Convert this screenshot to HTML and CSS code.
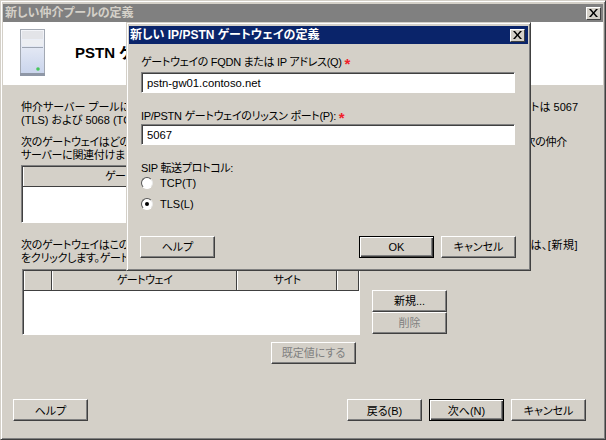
FILE: index.html
```html
<!DOCTYPE html>
<html lang="ja">
<head>
  <title>新しい仲介プールの定義</title>
  <link rel="stylesheet" href="styles.css">
</head>
<body>
  <div class="wizard">
    <div class="titlebar inactive">
      <span class="title-text">新しい仲介プールの定義</span>
      <span class="close-btn"><svg width="9" height="8" viewBox="0 0 9 8"><path d="M0 0h2l2.5 3L7 0h2L5.500 4 9 8H7L4.500 5 2 8H0l3.500-4z" fill="#000"/></svg></span>
    </div>
    <div class="wizard-head">
      <svg class="server-icon" width="25" height="47" viewBox="0 0 25 47">
        <defs>
          <linearGradient id="bodyFill" x1="0" y1="0" x2="0" y2="1">
            <stop offset="0" stop-color="#f4f5f9"/>
            <stop offset="1" stop-color="#c9d4ec"/>
          </linearGradient>
        </defs>
        <rect x="0.500" y="0.500" width="24" height="45" fill="url(#bodyFill)" stroke="#a3a9b3"/>
        <rect x="2" y="2" width="21" height="8" fill="#e3e4e8"/>
        <rect x="2" y="11" width="21" height="6" fill="#eceef2"/>
        <rect x="2" y="18" width="21" height="1" fill="#9ea5b2"/>
        <rect x="0" y="44" width="25" height="3" fill="#8f97a6"/>
        <circle cx="18" cy="40" r="1.800" fill="#45c65a"/>
      </svg>
      <h1 class="wizard-heading">PSTN ゲ</h1>
    </div>
    <div class="wizard-body">
      <div class="para">
        <div class="line"><span>仲介サーバー プールに</span><span class="line-end">トは 5067</span></div>
        <div class="line"><span>(TLS) および 5068 (TC</span></div>
      </div>
      <div class="para note">
        <div class="line"><span>次のゲートウェイはどの</span><span class="line-end short">次の仲介</span></div>
        <div class="line"><span>サーバーに関連付けま</span></div>
      </div>
      <div class="grid-box first-grid">
        <div class="grid-head"><span>ゲー</span></div>
        <div class="grid-rows"></div>
      </div>
      <div class="para note lower">
        <div class="line"><span>次のゲートウェイはこの</span><span class="line-end loose">は、[新規]</span></div>
        <div class="line"><span>をクリックします。ゲート</span></div>
      </div>
      <div class="gateway-row">
        <div class="grid-box second-grid">
          <div class="grid-head"><span></span><span>ゲートウェイ</span><span>サイト</span><span></span></div>
          <div class="grid-rows"></div>
        </div>
        <div class="side-btns">
          <button class="btn">新規...</button>
          <button class="btn" disabled>削除</button>
        </div>
      </div>
      <div class="default-row"><button class="btn wide" disabled>既定値にする</button></div>
    </div>
    <div class="wizard-foot">
      <button class="btn">ヘルプ</button>
      <div class="foot-right">
        <button class="btn">戻る(B)</button>
        <button class="btn primary">次へ(N)</button>
        <button class="btn">キャンセル</button>
      </div>
    </div>
  </div>

  <div class="dialog">
    <div class="titlebar active">
      <span class="title-text">新しい IP/PSTN ゲートウェイの定義</span>
      <span class="close-btn"><svg width="9" height="8" viewBox="0 0 9 8"><path d="M0 0h2l2.5 3L7 0h2L5.500 4 9 8H7L4.500 5 2 8H0l3.500-4z" fill="#000"/></svg></span>
    </div>
    <div class="dialog-body">
      <label class="field-label">ゲートウェイの FQDN または IP アドレス(Q) <span class="req">*</span></label>
      <input class="field" type="text" value="pstn-gw01.contoso.net">
      <label class="field-label second">IP/PSTN ゲートウェイのリッスン ポート(P): <span class="req">*</span></label>
      <input class="field" type="text" value="5067">
      <div class="field-label third">SIP 転送プロトコル:</div>
      <div class="radio-row"><span class="radio"></span>TCP(T)</div>
      <div class="radio-row"><span class="radio checked"></span>TLS(L)</div>
      <div class="dialog-foot">
        <button class="btn">ヘルプ</button>
        <div class="foot-right">
          <button class="btn primary">OK</button>
          <button class="btn">キャンセル</button>
        </div>
      </div>
    </div>
  </div>
</body>
</html>
```

FILE: styles.css
```css
html, body {
  margin: 0;
  padding: 0;
}
body {
  width: 606px;
  height: 440px;
  overflow: hidden;
  position: relative;
  background: #d4d0c8;
  font-family: 'Liberation Sans', 'Noto Sans CJK JP', sans-serif;
  font-size: 11px;
  font-feature-settings: "palt";
  color: #000;
}
h1 {
  margin: 0;
}
.wizard {
  box-sizing: border-box;
  width: 606px;
  height: 440px;
  padding: 3px 2px 2px 2px;
  display: flex;
  flex-direction: column;
  background: #d4d0c8;
  border: 1px solid;
  border-color: #d4d0c8 #404040 #404040 #d4d0c8;
  box-shadow: inset 1px 1px 0 #fff, inset -1px -1px 0 #808080;
}
.titlebar {
  display: flex;
  align-items: center;
  justify-content: space-between;
  flex: none;
  box-sizing: border-box;
  height: 18px;
}
.titlebar.inactive {
  padding: 0 2px;
  background: #808080;
  color: #d4d0c8;
}
.titlebar.active {
  padding: 0 3px 0 1px;
  background: #0a246a;
  color: #fff;
}
.title-text {
  font-size: 12px;
  font-weight: bold;
  line-height: 18px;
}
.close-btn {
  width: 15px;
  height: 13px;
  box-sizing: border-box;
  display: flex;
  align-items: center;
  justify-content: center;
  background: #d4d0c8;
  border: 1px solid;
  border-color: #fff #404040 #404040 #fff;
}
.wizard-head {
  flex: none;
  height: 63px;
  background: #fff;
  display: flex;
  align-items: center;
  padding-left: 17px;
}
.server-icon {
  flex: none;
  margin-top: -2px;
}
.wizard-heading {
  font-size: 15px;
  font-weight: bold;
  margin-left: 30px;
  margin-top: -4px;
}
.wizard-body {
  flex: 1;
  padding: 16px 19px 0 18px;
  line-height: 13px;
}
.line {
  display: flex;
  justify-content: space-between;
  height: 13px;
  white-space: nowrap;
}
.line-end {
  padding-right: 6px;
}
.line-end.short {
  padding-right: 17px;
}
.line-end.loose {
  letter-spacing: 0.500px;
}
.note {
  margin-top: 9px;
  letter-spacing: -0.300px;
}
.note.lower {
  margin-top: 16px;
}
.grid-box {
  box-sizing: border-box;
  background: #fff;
  border: 1px solid;
  border-color: #808080 #fff #fff #808080;
  box-shadow: inset 1px 1px 0 #404040;
  padding: 1px 0 0 1px;
  display: flex;
  flex-direction: column;
}
.first-grid {
  width: 340px;
  height: 58px;
  margin-top: 3px;
}
.second-grid {
  width: 338px;
  height: 66px;
  margin-left: 1px;
}
.grid-head {
  display: grid;
  grid-template-columns: 28px 185px 100px 1fr;
  height: 19px;
  flex: none;
  background: #d4d0c8;
  border-bottom: 1px solid #404040;
}
.first-grid .grid-head {
  grid-template-columns: 1fr;
}
.grid-head span {
  display: block;
  text-align: center;
  letter-spacing: -0.500px;
  line-height: 19px;
  border-left: 1px solid #fff;
  border-right: 1px solid #404040;
}
.first-grid .grid-head span {
  text-align: left;
  padding-left: 81px;
}
.grid-rows {
  flex: 1;
}
.gateway-row {
  display: flex;
  margin-top: 4px;
}
.side-btns {
  display: flex;
  flex-direction: column;
  margin: 21px 0 0 12px;
}
.default-row {
  display: flex;
  padding-left: 250px;
  margin-top: 7px;
}
.btn {
  box-sizing: border-box;
  width: 75px;
  height: 22px;
  padding: 0;
  font: inherit;
  font-feature-settings: "palt";
  color: #000;
  background: #d4d0c8;
  border: 1px solid;
  border-color: #fff #404040 #404040 #fff;
  box-shadow: inset -1px -1px 0 #808080;
  border-radius: 0;
}
.btn:disabled {
  color: #808080;
}
.btn.wide {
  width: 85px;
}
.btn.primary {
  border: 1px solid #000;
  box-shadow: inset 1px 1px 0 #fff, inset -1px -1px 0 #404040, inset -2px -2px 0 #808080;
}
.wizard-foot {
  flex: none;
  display: flex;
  justify-content: space-between;
  padding: 0 17px 16px 10px;
}
.foot-right {
  display: flex;
  gap: 7px;
}
.dialog {
  position: absolute;
  left: 126px;
  top: 22px;
  width: 405px;
  height: 249px;
  box-sizing: border-box;
  padding: 3px 2px 2px 2px;
  background: #d4d0c8;
  border: 1px solid;
  border-color: #d4d0c8 #404040 #404040 #d4d0c8;
  box-shadow: inset 1px 1px 0 #fff, inset -1px -1px 0 #808080;
}
.dialog-body {
  padding: 11px 13px 0 12px;
  line-height: 14px;
}
.field-label {
  display: block;
  letter-spacing: -0.300px;
}
.field-label.second {
  margin-top: 16px;
}
.field-label.second + .field {
  margin-top: 1px;
}
.field-label.third {
  margin-top: 16px;
}
.req {
  color: #f0202a;
  font-size: 15px;
  font-weight: bold;
  line-height: 0;
  vertical-align: -3px;
}
.field {
  display: block;
  box-sizing: border-box;
  width: 374px;
  height: 21px;
  margin-top: 3px;
  padding: 0 5px;
  font: inherit;
  font-size: 11.300px;
  background: #fff;
  border: 1px solid;
  border-color: #808080 #fff #fff #808080;
  box-shadow: inset 1px 1px 0 #404040;
  border-radius: 0;
  outline: none;
}
.radio-row {
  display: flex;
  align-items: center;
  height: 14px;
  margin-top: 1px;
  margin-bottom: 7px;
}
.radio {
  box-sizing: border-box;
  width: 12px;
  height: 12px;
  margin-right: 7px;
  border-radius: 50%;
  background: #fff;
  border: 1px solid;
  border-color: #555 #e8e8e8 #fff #555;
  display: flex;
  align-items: center;
  justify-content: center;
}
.radio.checked::after {
  content: "";
  width: 4px;
  height: 4px;
  border-radius: 50%;
  background: #000;
}
.dialog-foot {
  display: flex;
  justify-content: space-between;
  margin: 25px -1px 0 -1px;
}
```
